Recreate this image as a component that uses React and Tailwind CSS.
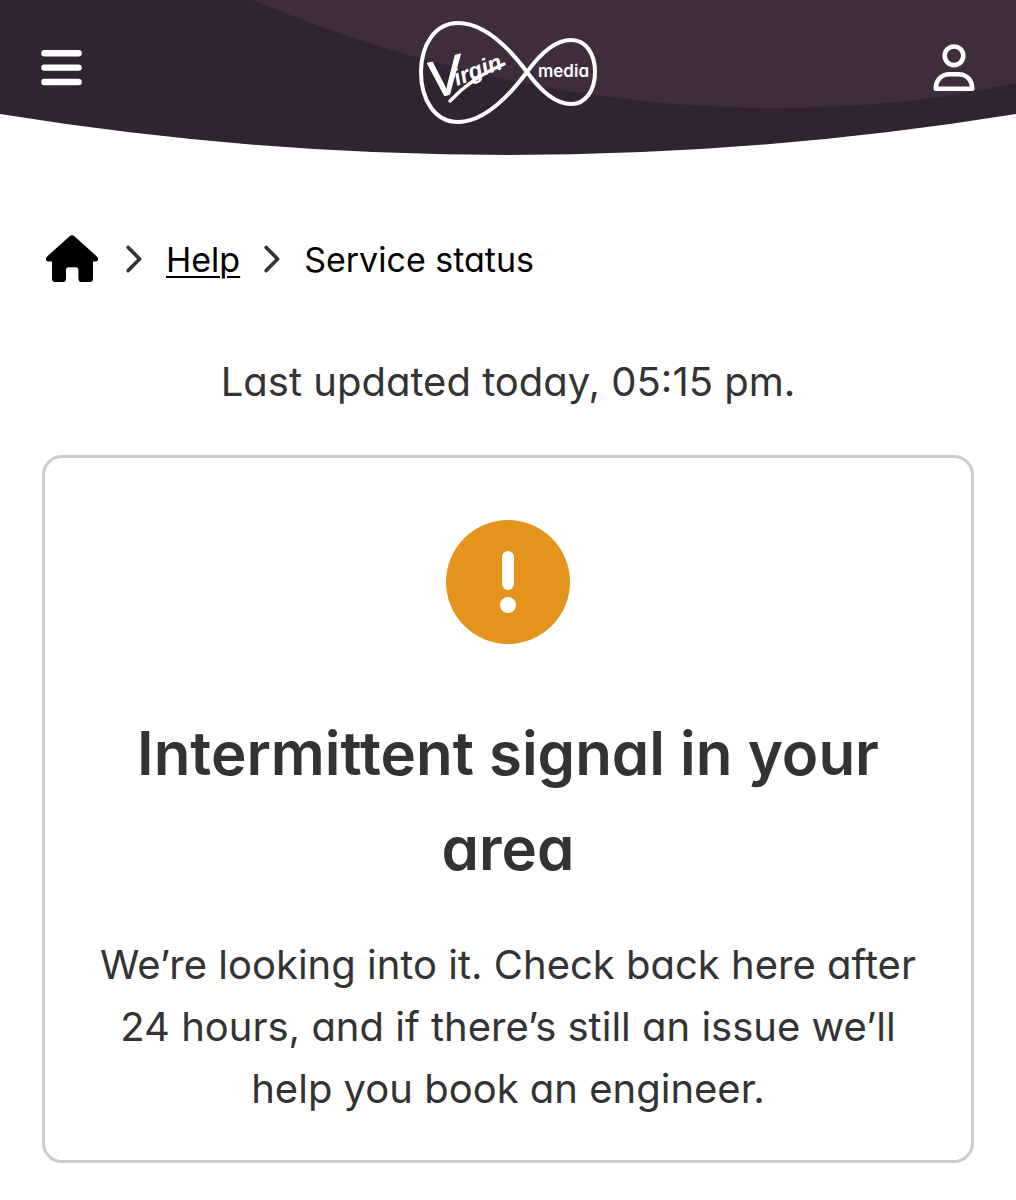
import React from 'react';

const CURVE = 'M0 0H1016V114Q508 196 0 114Z';

function HeaderCurve() {
  return (
    <svg
      className="col-start-1 row-start-1 h-full w-full"
      viewBox="0 0 1016 155"
      preserveAspectRatio="none"
      aria-hidden="true"
    >
      <path d={CURVE} fill="#312432" />
      <path
        d="M252 0C420 70 600 108 775 108C860 108 940 100 1016 83V0Z"
        fill="#3f2d3d"
      />
    </svg>
  );
}

function MenuIcon() {
  return (
    <svg width="42" height="36" viewBox="0 0 42 36" fill="none" stroke="#fff" strokeWidth="6.4" strokeLinecap="round" aria-hidden="true">
      <path d="M3.4 3.2H37.6M3.4 17.6H37.6M3.4 32H37.6" />
    </svg>
  );
}

function UserIcon() {
  return (
    <svg width="42" height="48" viewBox="0 0 42 48" fill="none" stroke="#fff" strokeWidth="4.6" strokeLinejoin="round" aria-hidden="true">
      <circle cx="21" cy="11.8" r="9.3" />
      <path d="M2.8 44.8C2.8 36 8.6 30.2 16.5 30.2H25.5C33.4 30.2 39.2 36 39.2 44.8Z" />
    </svg>
  );
}

function Logo() {
  return (
    <svg width="180" height="105" viewBox="0 0 180 105" fill="none" role="img" aria-label="Virgin Media">
      <path
        d="M109 52C88 24 64 3 40 3C17 3 3 25 3 52C3 80 17 102 40 102C64 102 88 80 109 52C122 34 138 20 153 20C168 20 177 34 177 52C177 70 168 84 153 84C138 84 122 70 109 52Z"
        stroke="#fff"
        strokeWidth="4"
      />
      <g fill="#fff" className="font-['Liberation_Sans',sans-serif] italic">
        <text transform="translate(15 79) rotate(-16)" fontSize="52" stroke="#fff">V</text>
        <text transform="translate(39 66) rotate(-21)" fontSize="23" className="font-bold">irgin</text>
      </g>
      <path d="M32 81C46 66 62 54 86 44" stroke="#fff" strokeWidth="3.4" strokeLinecap="round" />
      <text x="120" y="57" fontSize="17" fill="#fff" className="font-semibold">media</text>
    </svg>
  );
}

function HomeIcon() {
  return (
    <svg width="52" height="48" viewBox="0 0 52 48" fill="#000" aria-hidden="true">
      <path d="M23.6 1.2a3.6 3.6 0 0 1 4.8 0L50.8 21.4c2.4 2.2 1.2 5-1.4 5H47V43.4a3.6 3.6 0 0 1-3.6 3.6H36a3.6 3.6 0 0 1-3.6-3.6V35a2.8 2.8 0 0 0-2.8-2.8H22.8A2.8 2.8 0 0 0 20 35V43.4a3.6 3.6 0 0 1-3.6 3.6H9.6A3.6 3.6 0 0 1 6 43.4V26.4H2.6C0 26.4-1.2 23.6 1.2 21.4Z" />
    </svg>
  );
}

function Chevron() {
  return (
    <svg width="16" height="28" viewBox="0 0 16 28" fill="none" stroke="#333" strokeWidth="3.6" strokeLinecap="round" strokeLinejoin="round" aria-hidden="true">
      <path d="M2.2 2.4L13.6 14L2.2 25.6" />
    </svg>
  );
}

function AlertIcon() {
  return (
    <svg className="mx-auto" width="124" height="124" viewBox="0 0 124 124" aria-hidden="true">
      <circle cx="62" cy="62" r="62" fill="#e4931d" />
      <rect x="56" y="31" width="12" height="39" rx="6" fill="#fff" />
      <circle cx="62" cy="85" r="8" fill="#fff" />
    </svg>
  );
}

export default function App() {
  return (
    <div className="min-h-screen bg-white pb-9 font-[Inter,sans-serif] text-[#333] [font-feature-settings:'cv11']">
      <header className="grid h-[155px]">
        <HeaderCurve />
        <div className="z-10 col-start-1 row-start-1 flex items-start justify-between px-[41px] pt-5">
          <button type="button" aria-label="Open menu" className="flex h-24 w-[180px] items-center">
            <MenuIcon />
          </button>
          <a href="#home">
            <Logo />
          </a>
          <button type="button" aria-label="My account" className="flex h-24 w-[180px] items-center justify-end">
            <UserIcon />
          </button>
        </div>
      </header>

      <main className="px-[42px]">
        <nav aria-label="Breadcrumb" className="pt-20">
          <ol className="flex h-12 items-center gap-6 text-[34px] text-black">
            <li className="px-1">
              <a href="#home" aria-label="Home">
                <HomeIcon />
              </a>
            </li>
            <li className="flex items-center gap-6">
              <Chevron />
              <a href="#help" className="underline decoration-2 underline-offset-4">Help</a>
            </li>
            <li className="flex items-center gap-6">
              <Chevron />
              <span aria-current="page">Service status</span>
            </li>
          </ol>
        </nav>

        <p className="mt-[68px] text-center text-[40px] leading-[62px]">
          Last updated today, 05:15 pm.
        </p>

        <section className="mt-[42px] rounded-[20px] border-3 border-[#ccc] px-12 pt-[62px] pb-10 text-center">
          <AlertIcon />
          <h1 className="mt-[62px] text-[60px] leading-[95px] font-semibold">
            Intermittent signal in your area
          </h1>
          <p className="mt-[38px] text-[40px] leading-[62px]">
            We’re looking into it. Check back here after 24 hours, and if there’s still an issue we’ll help you book an engineer.
          </p>
        </section>
      </main>
    </div>
  );
}
